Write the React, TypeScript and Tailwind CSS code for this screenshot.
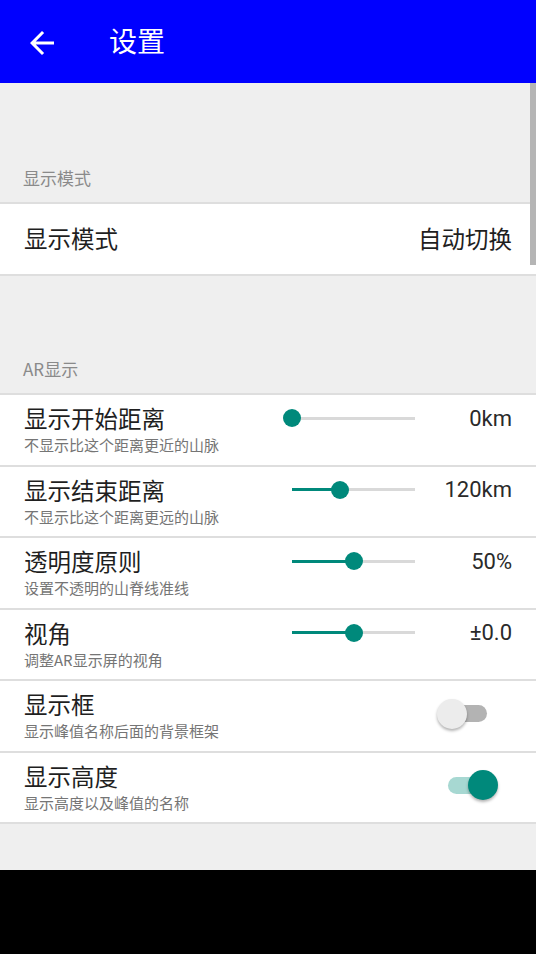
import React from 'react';

type SliderPref = { title: string; summary: string; value: string; pos: number };
type SwitchPref = { title: string; summary: string; on: boolean };

const sliders: SliderPref[] = [
  { title: '显示开始距离', summary: '不显示比这个距离更近的山脉', value: '0km', pos: 0 },
  { title: '显示结束距离', summary: '不显示比这个距离更远的山脉', value: '120km', pos: 0.39 },
  { title: '透明度原则', summary: '设置不透明的山脊线准线', value: '50%', pos: 0.5 },
  { title: '视角', summary: '调整AR显示屏的视角', value: '±0.0', pos: 0.5 },
];

const switches: SwitchPref[] = [
  { title: '显示框', summary: '显示峰值名称后面的背景框架', on: false },
  { title: '显示高度', summary: '显示高度以及峰值的名称', on: true },
];

function Slider({ pos }: { pos: number }) {
  return (
    <div className="relative w-[123px] h-[18px]">
      <div className="absolute left-0 right-0 top-[7.5px] h-[3px] bg-[#d9d9d9]" />
      <div className="absolute left-0 top-[7.5px] h-[3px] bg-[#00897b]" style={{ width: `${pos * 100}%` }} />
      <div
        className="absolute top-0 w-[18px] h-[18px] -ml-[9px] rounded-full bg-[#00897b]"
        style={{ left: `${pos * 100}%` }}
      />
    </div>
  );
}

function Toggle({ on }: { on: boolean }) {
  return (
    <div className="relative w-[61px] h-[30px]">
      <div className={`absolute left-[11px] top-[6.5px] w-[39px] h-[17px] rounded-full ${on ? 'bg-[#a7d8d2]' : 'bg-[#b3b3b3]'}`} />
      <div
        className={`absolute top-0 w-[30px] h-[30px] rounded-full shadow-[0_2px_3px_rgba(0,0,0,0.3)] ${on ? 'left-[31px] bg-[#00897b]' : 'left-0 bg-[#ececec]'}`}
      />
    </div>
  );
}

function PrefText({ title, summary }: { title: string; summary: string }) {
  return (
    <div className="flex flex-col flex-1 pt-[9px]">
      <span className="text-[23.5px] leading-[28px] text-[#1f1f1f]">{title}</span>
      <span className="text-[15px] leading-[18px] mt-[4px] text-[#757575]">{summary}</span>
    </div>
  );
}

export default function App() {
  return (
    <div className="w-[536px] h-[954px] flex flex-col bg-black" style={{ fontFamily: '"Noto Sans CJK SC", "Noto Sans", sans-serif' }}>
      {/* Toolbar */}
      <div className="h-[83px] shrink-0 bg-[#0000ff] flex items-center">
        <svg className="ml-[24px] mt-[2px]" width="36" height="36" viewBox="0 0 24 24" fill="white">
          <path d="M20 11H7.83l5.59-5.59L12 4l-8 8 8 8 1.41-1.41L7.83 13H20v-2z" />
        </svg>
        <h1 className="ml-[49px] -mt-[3px] text-[28px] leading-none text-white">设置</h1>
      </div>

      {/* Preferences */}
      <div className="relative h-[787px] shrink-0 bg-[#efefef] flex flex-col">
        <div className="h-[119px] flex items-end pb-[12px] px-[23px]">
          <span className="text-[17px] leading-[24px] text-[#8a8a8a]">显示模式</span>
        </div>
        <div className="bg-white border-y-2 border-[#dedede]">
          <div className="h-[70px] px-[24px] flex items-center justify-between text-[23.5px] text-[#1f1f1f]">
            <span>显示模式</span>
            <span>自动切换</span>
          </div>
        </div>

        <div className="h-[117px] flex items-end pb-[12px] px-[23px]">
          <span className="text-[17px] leading-[24px] text-[#8a8a8a]">AR显示</span>
        </div>
        <div className="bg-white border-t-2 border-[#dedede]">
          {sliders.map((s) => (
            <div key={s.title} className="h-[71.5px] px-[24px] flex border-b-2 border-[#dedede]">
              <PrefText title={s.title} summary={s.summary} />
              <div className="flex items-center h-[28px] mt-[9px]">
                <Slider pos={s.pos} />
                <span className="w-[97px] text-right text-[22px] text-[#2a2a2a]" style={{ fontFamily: 'Roboto, sans-serif' }}>
                  {s.value}
                </span>
              </div>
            </div>
          ))}
          {switches.map((s) => (
            <div key={s.title} className="h-[71.5px] pl-[24px] pr-[38px] flex items-center border-b-2 border-[#dedede]">
              <div className="self-start flex flex-1">
                <PrefText title={s.title} summary={s.summary} />
              </div>
              <div className="-mt-[4px]">
                <Toggle on={s.on} />
              </div>
            </div>
          ))}
        </div>

        {/* scrollbar */}
        <div className="absolute right-0 top-0 w-[6px] h-[182px] bg-[#b5b5b5]" />
      </div>
    </div>
  );
}
